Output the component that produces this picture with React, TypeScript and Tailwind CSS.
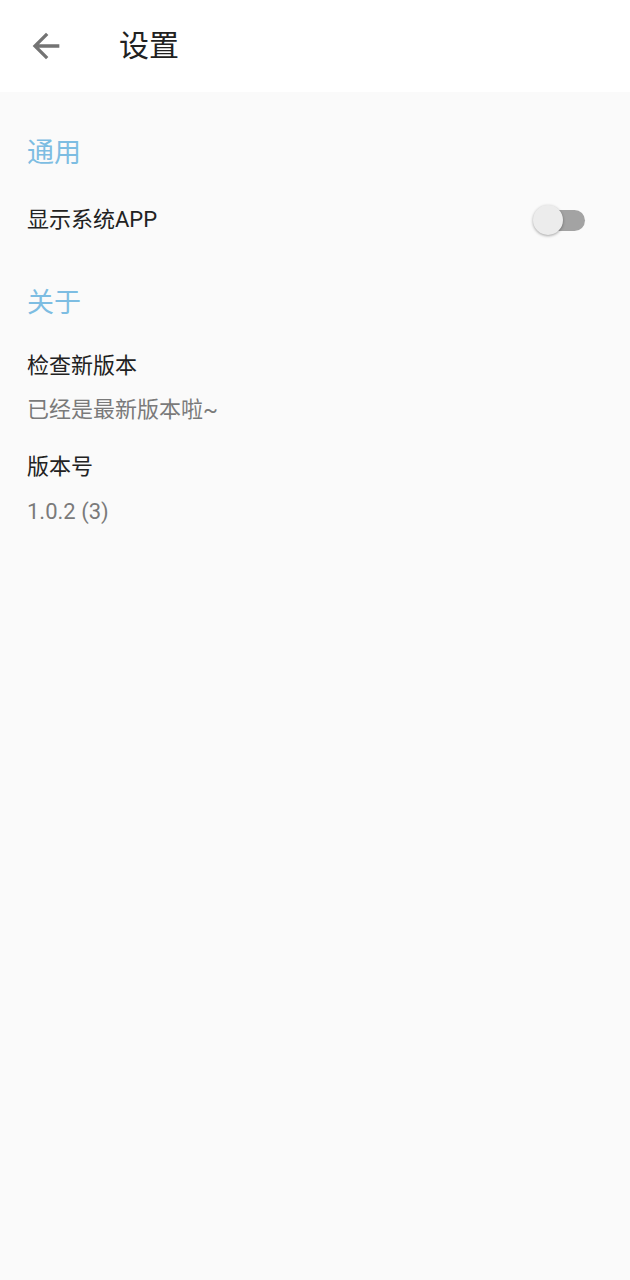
const cjk = { fontFamily: 'Roboto, "Noto Sans CJK SC", sans-serif' };

function BackArrow() {
  return (
    <svg viewBox="0 0 24 24" className="h-10 w-10" fill="#737373">
      <path d="M20 11H7.83l5.59-5.59L12 4l-8 8 8 8 1.41-1.41L7.83 13H20v-2z" />
    </svg>
  );
}

function Toggle() {
  return (
    <div className="relative h-[21px] w-[51px] rounded-full bg-[#a3a3a3]">
      <div className="absolute left-[-1px] top-1/2 h-[30px] w-[30px] -translate-y-1/2 rounded-full bg-[#ececec] shadow-[0_1px_3px_rgba(0,0,0,0.35)]" />
    </div>
  );
}

export default function App() {
  return (
    <div className="min-h-[1280px] w-[630px] bg-[#fafafa]" style={cjk}>
      <header className="flex h-[92px] items-center bg-white pl-[26px]">
        <BackArrow />
        <h1 className="ml-[53px] text-[30px] leading-none text-[#212121]">设置</h1>
      </header>

      <main className="px-[27px]">
        <h2 className="mt-[43px] text-[27px] leading-[36px] text-[#7dbde2]">通用</h2>
        <div className="mt-[14px] flex h-[70px] items-center justify-between pr-[18px]">
          <span className="text-[22px] leading-[28px] text-[#222222]">显示系统APP</span>
          <Toggle />
        </div>

        <h2 className="mt-[30px] text-[27px] leading-[36px] text-[#7dbde2]">关于</h2>
        <p className="mt-[31px] text-[22px] leading-[28px] text-[#222222]">检查新版本</p>
        <p className="mt-[16px] text-[22px] leading-[28px] text-[#7a7a7a]">已经是最新版本啦~</p>
        <p className="mt-[29px] text-[22px] leading-[28px] text-[#222222]">版本号</p>
        <p className="mt-[17px] text-[22px] leading-[28px] text-[#7a7a7a]">1.0.2 (3)</p>
      </main>
    </div>
  );
}
